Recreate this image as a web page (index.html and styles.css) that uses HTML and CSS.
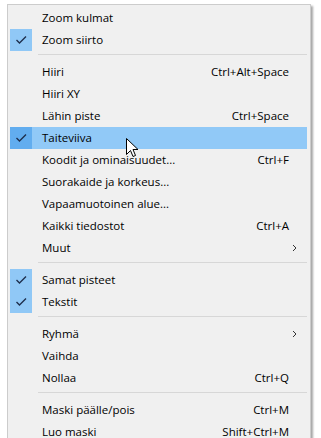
FILE: index.html
```html
<!DOCTYPE html>
<html lang="fi">
<head>
<meta charset="utf-8">
<title>Valikko</title>
<link rel="stylesheet" href="styles.css">
</head>
<body>
<div class="menu">
  <div class="item"><span class="check"></span><span class="label">Zoom kulmat</span><span class="key"></span><span class="sub"></span></div>
  <div class="item checked"><span class="check"><svg viewBox="0 0 22 22" width="22" height="22"><path d="M6.5 11 L9.5 14 L16 7.5" fill="none" stroke="#1e2f4d" stroke-width="1.4"/></svg></span><span class="label">Zoom siirto</span><span class="key"></span><span class="sub"></span></div>
  <div class="sep"></div>
  <div class="item"><span class="check"></span><span class="label">Hiiri</span><span class="key">Ctrl+Alt+Space</span><span class="sub"></span></div>
  <div class="item"><span class="check"></span><span class="label">Hiiri XY</span><span class="key"></span><span class="sub"></span></div>
  <div class="item"><span class="check"></span><span class="label">Lähin piste</span><span class="key">Ctrl+Space</span><span class="sub"></span></div>
  <div class="item checked hover"><span class="check"><svg viewBox="0 0 22 22" width="22" height="22"><path d="M6.5 11 L9.5 14 L16 7.5" fill="none" stroke="#1e2f4d" stroke-width="1.4"/></svg></span><span class="label">Taiteviiva</span><span class="key"></span><span class="sub"></span>
    <svg class="cursor" viewBox="0 0 13 20" width="13" height="20"><path d="M0.5 0.5 L0.5 16.5 L4.5 12.5 L7 18.5 L9.5 17.5 L7 11.5 L12 11.5 Z" fill="#fff" stroke="#000" stroke-width="1" stroke-linejoin="miter"/></svg>
  </div>
  <div class="item"><span class="check"></span><span class="label">Koodit ja ominaisuudet...</span><span class="key">Ctrl+F</span><span class="sub"></span></div>
  <div class="item"><span class="check"></span><span class="label">Suorakaide ja korkeus...</span><span class="key"></span><span class="sub"></span></div>
  <div class="item"><span class="check"></span><span class="label">Vapaamuotoinen alue...</span><span class="key"></span><span class="sub"></span></div>
  <div class="item"><span class="check"></span><span class="label">Kaikki tiedostot</span><span class="key">Ctrl+A</span><span class="sub"></span></div>
  <div class="item"><span class="check"></span><span class="label">Muut</span><span class="key"></span><span class="sub"><svg viewBox="0 0 5 8" width="5" height="8"><path d="M1 1 L4 4 L1 7" fill="none" stroke="#333" stroke-width="1"/></svg></span></div>
  <div class="sep"></div>
  <div class="item checked"><span class="check"><svg viewBox="0 0 22 22" width="22" height="22"><path d="M6.5 11 L9.5 14 L16 7.5" fill="none" stroke="#1e2f4d" stroke-width="1.4"/></svg></span><span class="label">Samat pisteet</span><span class="key"></span><span class="sub"></span></div>
  <div class="item checked"><span class="check"><svg viewBox="0 0 22 22" width="22" height="22"><path d="M6.5 11 L9.5 14 L16 7.5" fill="none" stroke="#1e2f4d" stroke-width="1.4"/></svg></span><span class="label">Tekstit</span><span class="key"></span><span class="sub"></span></div>
  <div class="sep"></div>
  <div class="item"><span class="check"></span><span class="label">Ryhmä</span><span class="key"></span><span class="sub"><svg viewBox="0 0 5 8" width="5" height="8"><path d="M1 1 L4 4 L1 7" fill="none" stroke="#333" stroke-width="1"/></svg></span></div>
  <div class="item"><span class="check"></span><span class="label">Vaihda</span><span class="key"></span><span class="sub"></span></div>
  <div class="item"><span class="check"></span><span class="label">Nollaa</span><span class="key">Ctrl+Q</span><span class="sub"></span></div>
  <div class="sep"></div>
  <div class="item"><span class="check"></span><span class="label">Maski päälle/pois</span><span class="key">Ctrl+M</span><span class="sub"></span></div>
  <div class="item"><span class="check"></span><span class="label">Luo maski</span><span class="key">Shift+Ctrl+M</span><span class="sub"></span></div>
</div>
</body>
</html>
```

FILE: styles.css
```css
html, body {
  margin: 0;
  padding: 0;
  background: #ffffff;
}

body {
  font-family: "Open Sans", "Noto Sans", "Liberation Sans", sans-serif;
  font-size: 11.5px;
  color: #000;
}

.menu {
  box-sizing: border-box;
  width: 304px;
  margin: 4px 0 0 7px;
  padding: 2px;
  background: #f0f0f0;
  border: 1px solid #cccccc;
  box-shadow: 2px 2px 2px rgba(0, 0, 0, 0.35);
}

.item {
  position: relative;
  display: grid;
  grid-template-columns: 22px 1fr auto 18px;
  align-items: center;
  height: 22px;
  line-height: 22px;
  margin: 0 1px 0 0;
  white-space: nowrap;
}

.check {
  width: 22px;
  height: 22px;
  display: flex;
}

.checked .check {
  background: #90c8f6;
}

.hover {
  background: #91c9f7;
}

.hover .check {
  background: #62adef;
}

.label {
  padding-left: 10px;
}

.key {
  text-align: right;
}

.sub {
  display: flex;
  align-items: center;
  padding-left: 3px;
  height: 22px;
}

.sep {
  height: 7px;
  position: relative;
  margin-left: 28px;
  margin-right: 1px;
}

.sep::after {
  content: "";
  display: block;
  height: 1px;
  margin-top: 3px;
  background: #d7d7d7;
}

.cursor {
  position: absolute;
  left: 116px;
  top: 11px;
}
```
